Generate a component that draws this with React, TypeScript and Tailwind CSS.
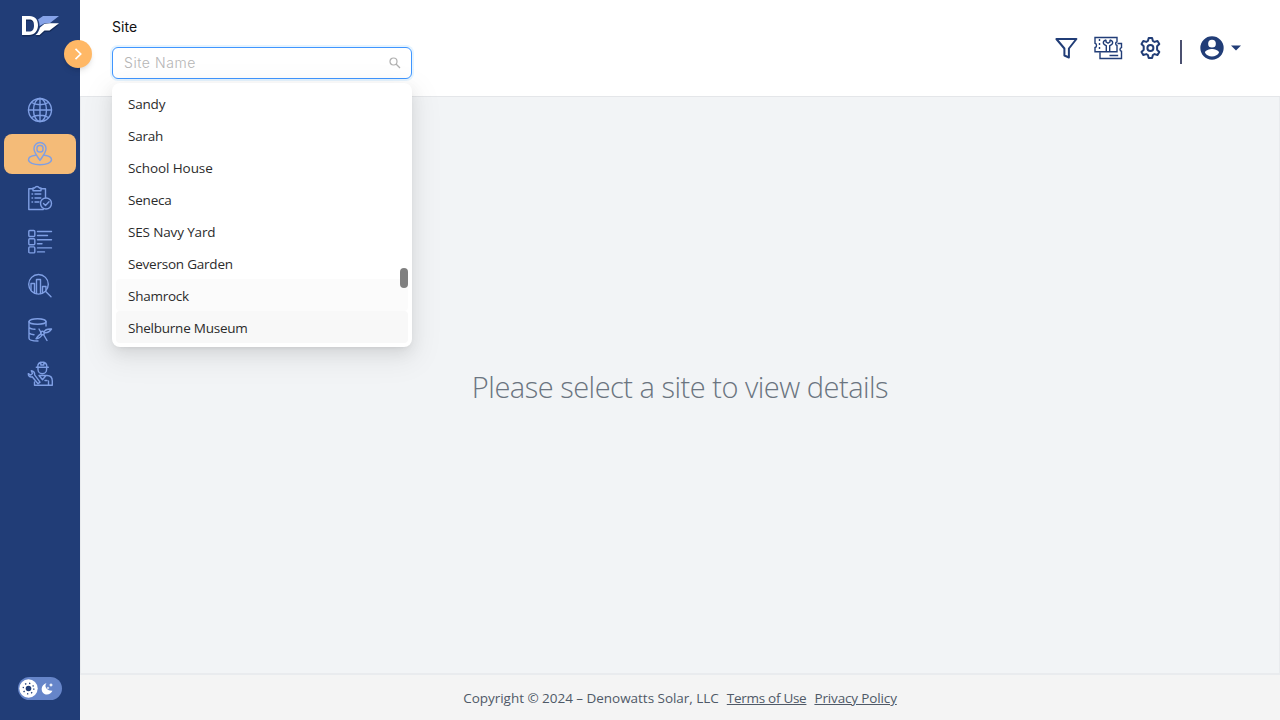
import type { ReactNode } from "react";

const sites = [
  { name: "Sandy", look: "tracking-[-0.2px]" },
  { name: "Sarah", look: "tracking-[-0.25px]" },
  { name: "School House", look: "tracking-[-0.08px]" },
  { name: "Seneca", look: "tracking-[-0.2px]" },
  { name: "SES Navy Yard", look: "tracking-[-0.15px]" },
  { name: "Severson Garden", look: "tracking-[-0.22px]" },
  { name: "Shamrock", look: "tracking-[-0.25px] bg-[#fbfbfb]" },
  { name: "Shelburne Museum", look: "tracking-[-0.23px] bg-[#f8f8f8]" },
];

function NavItem({ active = false, children }: { active?: boolean; children: ReactNode }) {
  return (
    <a className={`flex h-10 w-[72px] items-center justify-center rounded-lg ${active ? "bg-[#f4bb78]" : ""}`}>
      <svg width="26" height="26" viewBox="0 0 26 26" fill="none" stroke="#7f9fe4" strokeWidth="1.4" strokeLinecap="round" strokeLinejoin="round">
        {children}
      </svg>
    </a>
  );
}

function Sidebar() {
  return (
    <aside className="relative z-20 flex h-full w-20 shrink-0 flex-col items-center bg-[#213d77]">
      <svg className="mt-3 h-7 w-11 shrink-0" viewBox="0 0 44 28">
        <g fill="#142a58" transform="translate(.3 1.5)">
          <path fillRule="evenodd" d="M4 4h7.500c5.500 0 8.500 3.500 8.500 9.300s-3.500 9.700-9 9.700H4zM8 7.500v12h3c3.500 0 5-2.200 5-6.100s-1.500-5.900-5-5.900z" />
          <path d="M17.500 23 23.500 12.500 28 11.500H40.500L31.500 18.500H26.500L21.500 23z" />
        </g>
        <path fillRule="evenodd" fill="#fff" d="M4 4h7.500c5.500 0 8.500 3.500 8.500 9.300s-3.500 9.700-9 9.700H4zM8 7.500v12h3c3.500 0 5-2.200 5-6.100s-1.500-5.900-5-5.900z" />
        <path fill="#86a3e8" d="M20 7.500 25 4H41L32 11H27L21.500 14C21.500 11.500 21 9.500 20 7.500z" />
        <path fill="#fff" d="M17.500 23C20.500 20.500 21 18 22 15.500L26.500 11.800 32 11.300H41L31.500 18.500H26.500L21.500 23z" />
      </svg>
      <button className="absolute top-10 left-16 flex size-7 items-center justify-center rounded-full bg-[#ffb866] shadow-md">
        <svg width="14" height="14" viewBox="0 0 14 14" fill="none" stroke="#fff" strokeWidth="1.7">
          <path d="m4.500 1.800 5.200 5.200-5.200 5.200" />
        </svg>
      </button>
      <nav className="mt-[49.600px] flex flex-col gap-1">
        <NavItem>
          <circle cx="13" cy="13" r="11.500" />
          <ellipse cx="13" cy="13" rx="6.500" ry="11.500" />
          <path d="M13 1.500v23M1.500 13h23M4.500 5.500c5 3 12 3 17 0M4.500 20.500c5-3 12-3 17 0" />
        </NavItem>
        <NavItem active>
          <path d="M13 19.500c-2-3.500-6-7.500-6-12a6 6 0 0 1 12 0c0 4.500-4 8.500-6 12z" />
          <rect x="10" y="4.500" width="6" height="6.500" rx="2.500" />
          <path d="M8.500 14.300C4 14.800 1.500 16.600 1.500 18.800c0 2.900 5 5 11.500 5s11.500-2.100 11.500-5c0-2.200-2.500-4-7-4.500" />
        </NavItem>
        <NavItem>
          <path d="M6 3.800H1.800v20.700h14.500M14 3.800h4.500v8.700M6 3h1.500c1.500-2 3.500-2 5 0H14v2.800H6z" />
          <path d="M5 9h.6M8 9h5.800M5 13h.6M8 13h5.800M5 17h.6M8 17h4" />
          <circle cx="19" cy="18.500" r="5.500" />
          <path d="m16.500 18.500 2 2 3.500-3.700" />
        </NavItem>
        <NavItem>
          <rect x="1.800" y="1.500" width="6" height="6" rx="1" />
          <rect x="1.800" y="9.700" width="6" height="6" rx="1" />
          <rect x="1.800" y="17.900" width="6" height="6" rx="1" />
          <path d="M10.500 2.500h14M10.500 6.500h10M10.500 10.700h14M10.500 14.700h4.500M10.500 18.900h14M10.500 22.900h7" />
        </NavItem>
        <NavItem>
          <circle cx="11.500" cy="11.300" r="9.800" />
          <path d="m18.500 18.300 5.500 5.500M4 17V10.500h3.500V20M9.500 20.500V6.500h4v14M15.500 19.500V13.500H19V17" />
        </NavItem>
        <NavItem>
          <ellipse cx="10.500" cy="4.500" rx="8.500" ry="2.800" />
          <path d="M2 4.500v16.800c0 1.600 4 2.700 9 2.700M19 4.500V9M2 10.500c1 1.200 3 1.700 6 1.800M2 16c1 1.200 3 1.600 5 1.700" />
          <circle cx="15.500" cy="16" r="1.800" />
          <path d="M14 15.500 12 12M17 15c1-2.200 4-3.300 7.500-3-1.800 2.800-4.700 4-7.200 3.700M14 17c-1.600.4-3 2-5 4.800 3.200-.3 5-1.800 6-4M16.500 17.500l3.500 6" />
        </NavItem>
        <NavItem>
          <path d="M10.700 6c0-3 2-4.700 4.600-4.700S19.900 3 19.900 6M9.300 6.300h12M13.800 1.200V4h3V1.200M11 7v1.500c0 2.500 2 4.200 4.300 4.200s4.300-1.700 4.300-4.200V7" />
          <path d="M12 14.500h8c3.500 0 5.300 2.500 5.300 5.500v4.300H7.500V21M12 14.500l3.500 4.300 3.500-4.300M21.500 20v4M18 19.500h2" />
          <path d="m5.200 15.800 5.800 7 2-1.700-5.400-7.200c.4-2.300-1.100-4-3.300-4.100l1.200 2.700-1.700 1.600-2.500-1.400c-.2 2.300 1.700 3.800 3.900 3.100z" />
        </NavItem>
      </nav>
      <div className="mt-auto mb-5 flex h-[23px] w-11 shrink-0 items-center gap-0.5 rounded-full bg-[#6685c9] px-0.5">
        <svg className="-ml-px" width="19" height="19" viewBox="0 0 19 19">
          <circle cx="9.500" cy="9.500" r="9.200" fill="#fff" />
          <circle cx="9.500" cy="9.500" r="2.800" fill="#213d77" />
          <circle cx="9.500" cy="9.500" r="5.300" fill="none" stroke="#213d77" strokeWidth="1.300" strokeDasharray="1.300 2.860" />
        </svg>
        <svg width="15" height="15" viewBox="0 0 15 15">
          <path d="M6.500 2C4 5 6 10 12.500 9.800 11 13 7.500 14.500 4.500 13 .4 10.800.5 4 6.500 2z" fill="#fff" />
          <path d="m11 2 .7 1.300L13 4l-1.300.7L11 6l-.7-1.300L9 4l1.300-.7zM8 5.500l.5 1 1 .5-1 .5-.5 1-.5-1-1-.5 1-.5z" fill="#fff" />
        </svg>
      </div>
    </aside>
  );
}

function HeaderActions() {
  return (
    <div className="mt-[34px] mr-[39px] flex h-7 items-center text-[#213d77]">
      <svg width="24" height="24" viewBox="0 0 24 24" fill="none" stroke="currentColor" strokeWidth="2" strokeLinejoin="round">
        <path d="M2.400 3h20l-7.500 9.500v9l-4.500-2v-7z" />
      </svg>
      <svg className="ml-[15px]" width="30" height="26" viewBox="0 0 30 26" fill="none" stroke="currentColor" strokeWidth="1.400">
        <path d="M2 2.500h22v4.200c-1.800.4-1.800 3.400 0 3.800v6.300H2v-4.300c2-.4 2-3.800 0-4.200z" />
        <path d="M24.500 8.500h4v4c-2 .5-2 3.300 0 3.700v7.300H7v-6.200M16.500 20.500h8.700" />
        <path d="M6.500 4v11.500" strokeDasharray="2 2" />
        <path d="M13 4.800c-2.200.7-3 2.100-2.500 3.700.3 1.100 1.400 1.600 2.800 2.300v5.800M17 4.800c2.200.7 3 2.100 2.500 3.700-.3 1.100-1.400 1.600-2.800 2.300v5.800M13 4.800v2l2 1.400 2-1.400v-2" />
      </svg>
      <svg className="ml-[15px]" width="24" height="24" viewBox="0 0 24 24" fill="none" stroke="currentColor" strokeWidth="2" strokeLinejoin="round">
        <g transform="translate(.4 0)">
          <path d="M10.300 2h3.400l.8 3 1.600.9 3-.9 1.800 3-2.200 2.200v3.600l2.200 2.200-1.800 3-3-.9-1.600.9-.8 3h-3.400l-.8-3-1.600-.9-3 .9-1.800-3 2.200-2.200v-3.600L3.100 8l1.800-3 3 .9 1.600-.9z" />
          <circle cx="12" cy="12" r="3" />
        </g>
      </svg>
      <div className="mt-2 ml-[18px] h-6 w-0.5 bg-[#4b5070]" />
      <svg className="ml-[16px]" width="28" height="28" viewBox="0 0 24 24" fill="currentColor">
        <path d="M12 2a10 10 0 1 0 0 20 10 10 0 0 0 0-20zm0 3a3.300 3.300 0 1 1 0 6.600A3.300 3.300 0 0 1 12 5zm0 14.200a7.200 7.200 0 0 1-6-3.220c.03-1.990 4-3.080 6-3.080 1.990 0 5.970 1.090 6 3.080a7.200 7.200 0 0 1-6 3.220z" />
      </svg>
      <svg className="ml-[5px]" width="10" height="6" viewBox="0 0 10 6" fill="currentColor">
        <path d="M0 .5h10L5 5.500z" />
      </svg>
    </div>
  );
}

export default function App() {
  return (
    <div className="flex h-[720px] w-[1280px] overflow-hidden bg-[#f2f4f6] font-['Open_Sans','Noto_Sans',sans-serif]">
      <Sidebar />
      <div className="flex min-w-0 flex-1 flex-col">
        <header className="relative z-10 flex h-[97px] shrink-0 justify-between border-b border-[#e4e6e9] bg-white">
          <div className="relative ml-8 w-[300px] pt-[17px]">
            <label className="block font-[Inter] text-[14px] leading-5 tracking-[0.1px] text-[#111]">Site</label>
            <div className="mt-2.5 flex h-8 items-center justify-between rounded-md border border-[#4096ff] bg-white px-[11px] shadow-[0_0_0_2px_rgba(5,145,255,0.1)]">
              <input className="mb-0.5 w-60 font-[Inter] text-[14px] tracking-[0.55px] outline-none placeholder:font-light placeholder:text-[#b5b5b5]" placeholder="Site Name" />
              <svg className="-mr-px" width="12" height="12" viewBox="0 0 12 12" fill="none" stroke="#b0b0b0" strokeWidth="1.200">
                <circle cx="4.500" cy="4.500" r="3.500" />
                <path d="m7 7 4 4" />
              </svg>
            </div>
            <div className="absolute top-[83px] left-0 h-[264px] w-full overflow-hidden rounded-lg bg-white px-1 pt-1 shadow-[0_6px_16px_0_rgba(0,0,0,0.08),0_3px_6px_-4px_rgba(0,0,0,0.12),0_9px_28px_8px_rgba(0,0,0,0.05)]">
              <ul>
                {sites.map(({ name, look }) => (
                  <li key={name} className={`h-8 rounded px-3 pt-px text-[13.500px] leading-8 text-[#2b2b2b] ${look}`}>
                    {name}
                  </li>
                ))}
              </ul>
              <div className="absolute top-[185px] right-1 h-5 w-2 rounded-full bg-[#808080]" />
            </div>
          </div>
          <HeaderActions />
        </header>
        <main className="flex flex-1 items-center justify-center border-x border-b-2 border-[#e9ebee] pt-1">
          <h1 className="text-[29px] leading-9 font-light tracking-[-0.5px] whitespace-nowrap text-[#6b7480]">Please select a site to view details</h1>
        </main>
        <footer className="flex h-[45px] shrink-0 items-center justify-center gap-2 bg-[#f4f4f4] pt-0.5 text-[13.500px] whitespace-nowrap text-[#4f5967]">
          <span className="tracking-[-0.03px]">Copyright © 2024 – Denowatts Solar, LLC</span>
          <a className="tracking-[-0.28px] underline">Terms of Use</a>
          <a className="tracking-[-0.14px] underline">Privacy Policy</a>
        </footer>
      </div>
    </div>
  );
}
